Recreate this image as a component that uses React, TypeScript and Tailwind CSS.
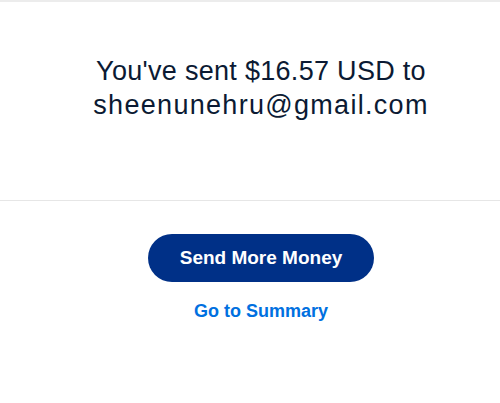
export default function App() {
  return (
    <div className="min-h-[403px] w-full bg-white" style={{ fontFamily: '"Liberation Sans", Arial, sans-serif' }}>
      <div className="h-[2px] w-full bg-[#ececec]" />
      <div className="flex h-[199px] items-start justify-center border-b border-[#e6e6e6] pt-[52px] pl-[22px]">
        <h1 className="flex flex-col items-center text-[27px] leading-[34px] font-normal text-[#0b1a33]">
          <span className="tracking-[0.3px]">You've sent $16.57 USD to</span>
          <span className="tracking-[1.3px]">sheenunehru@gmail.com</span>
        </h1>
      </div>
      <div className="flex flex-col items-center pt-[33px] pl-[22px]">
        <button
          type="button"
          className="h-[48px] w-[226px] rounded-full bg-[#003087] text-[19px] font-bold text-white"
        >
          Send More Money
        </button>
        <a href="#" className="mt-[16px] text-[18px] font-bold text-[#0070e0]">
          Go to Summary
        </a>
      </div>
    </div>
  )
}
